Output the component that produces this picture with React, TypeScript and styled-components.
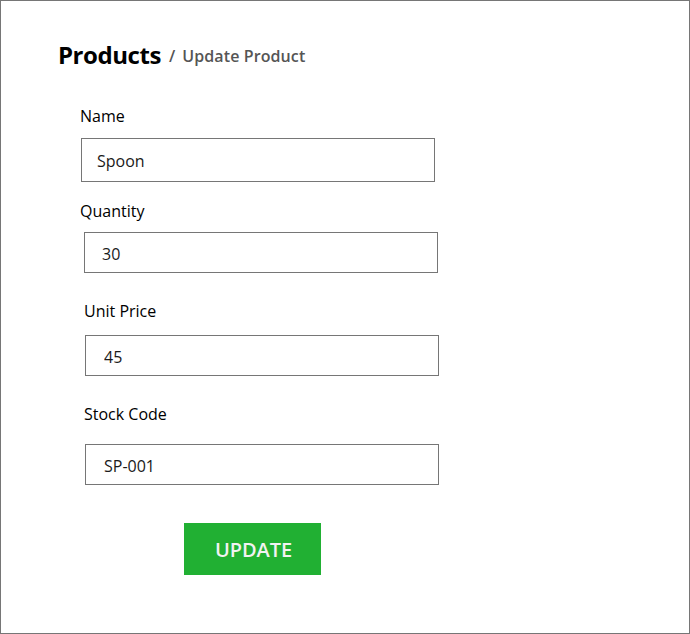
import React from "react";
import styled, { createGlobalStyle } from "styled-components";

const Global = createGlobalStyle`
  html, body { margin: 0; padding: 0; background: #ffffff; }
  body { font-family: "Open Sans", "Noto Sans", sans-serif; }
  * { box-sizing: border-box; }
`;

const Frame = styled.div`
  width: 690px;
  height: 634px;
  border: 1px solid #767676;
  background: #ffffff;
  padding: 38px 0 0 0;
  display: flex;
  flex-direction: column;
`;

const Header = styled.div`
  display: flex;
  align-items: flex-start;
  gap: 8px;
  margin-left: 57px;
  height: 32px;
`;

const Title = styled.h1`
  margin: 0;
  font-size: 24px;
  line-height: 32px;
  font-weight: 700;
  color: #000000;
  letter-spacing: -0.45px;
`;

const Crumb = styled.span`
  margin-top: 6px;
  display: flex;
  gap: 7px;
  font-size: 16px;
  line-height: 22px;
  font-weight: 600;
  color: #555555;
  letter-spacing: 0.1px;
`;

const Form = styled.form`
  display: flex;
  flex-direction: column;
  align-items: flex-start;
`;

const Label = styled.label<{ $x: number; $top: number }>`
  display: block;
  margin: ${(p) => p.$top}px 0 0 ${(p) => p.$x}px;
  font-size: 16px;
  line-height: 22px;
  font-weight: 400;
  color: #000000;
`;

const Input = styled.input<{ $x: number; $top: number; $h: number; $pad: number }>`
  display: block;
  margin: ${(p) => p.$top}px 0 0 ${(p) => p.$x}px;
  width: 354px;
  height: ${(p) => p.$h}px;
  border: 1px solid #767676;
  border-radius: 0;
  padding: 2px 0 0 ${(p) => p.$pad}px;
  font-family: "Open Sans", "Noto Sans", sans-serif;
  font-size: 16px;
  color: #1a1a1a;
  background: #ffffff;
  outline: none;
`;

const Button = styled.button`
  margin: 38px 0 0 183px;
  width: 137px;
  height: 52px;
  border: none;
  border-radius: 0;
  background: #21b033;
  color: #f2f2f2;
  font-family: "Open Sans", "Noto Sans", sans-serif;
  font-size: 20px;
  font-weight: 600;
  letter-spacing: -0.1px;
  cursor: pointer;
  padding: 0 0 0 2px;
`;

type FieldDef = {
  label: string;
  value: string;
  labelX: number;
  labelTop: number;
  inputX: number;
  inputTop: number;
  h: number;
  pad: number;
};

const fields: FieldDef[] = [
  { label: "Name", value: "Spoon", labelX: 79, labelTop: 34, inputX: 80, inputTop: 11, h: 44, pad: 15 },
  { label: "Quantity", value: "30", labelX: 79, labelTop: 18, inputX: 83, inputTop: 10, h: 41, pad: 17 },
  { label: "Unit Price", value: "45", labelX: 83, labelTop: 27, inputX: 84, inputTop: 13, h: 41, pad: 18 },
  { label: "Stock Code", value: "SP-001", labelX: 83, labelTop: 27, inputX: 84, inputTop: 19, h: 41, pad: 18 },
];

export default function App() {
  return (
    <>
      <Global />
      <Frame>
        <Header>
          <Title>Products</Title>
          <Crumb>
            <span>/</span>
            <span>Update Product</span>
          </Crumb>
        </Header>
        <Form onSubmit={(e) => e.preventDefault()}>
          {fields.map((f) => (
            <React.Fragment key={f.label}>
              <Label $x={f.labelX} $top={f.labelTop}>{f.label}</Label>
              <Input
                $x={f.inputX}
                $top={f.inputTop}
                $h={f.h}
                $pad={f.pad}
                defaultValue={f.value}
              />
            </React.Fragment>
          ))}
          <Button type="submit">UPDATE</Button>
        </Form>
      </Frame>
    </>
  );
}
